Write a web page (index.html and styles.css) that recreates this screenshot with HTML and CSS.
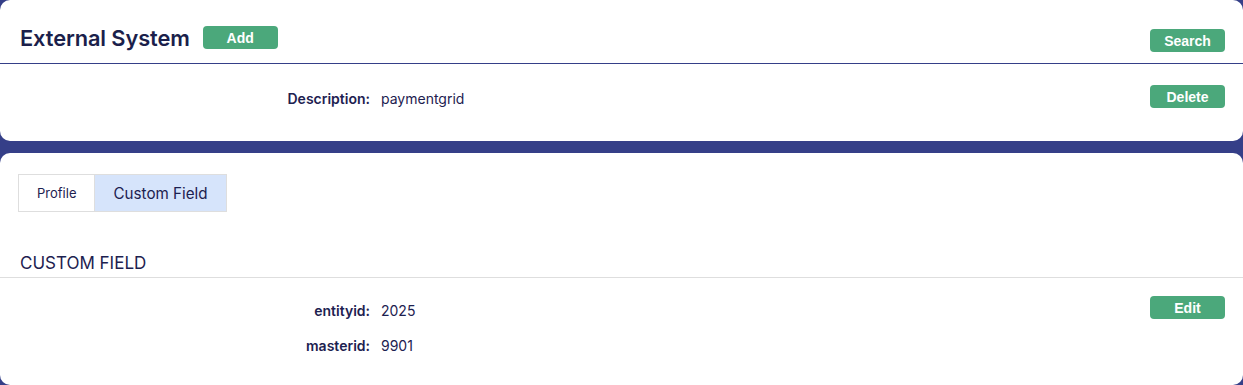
FILE: index.html
```html
<!DOCTYPE html>
<html>
<head>
<meta charset="utf-8">
<link rel="stylesheet" href="styles.css">
</head>
<body>
<section class="card card-top">
  <header class="head">
    <h1 class="title">External System</h1>
    <button class="btn">Add</button>
    <div class="spacer"></div>
    <button class="btn btn-search">Search</button>
  </header>
  <div class="detail">
    <div class="fields">
      <div class="label">Description:</div>
      <div class="value">paymentgrid</div>
    </div>
    <button class="btn">Delete</button>
  </div>
</section>
<section class="card card-bottom">
  <nav class="tabs">
    <div class="tab">Profile</div>
    <div class="tab tab-active">Custom Field</div>
  </nav>
  <h2 class="section-title">CUSTOM FIELD</h2>
  <div class="detail detail-cf">
    <div class="fields">
      <div class="label">entityid:</div>
      <div class="value">2025</div>
      <div class="label">masterid:</div>
      <div class="value">9901</div>
    </div>
    <button class="btn">Edit</button>
  </div>
</section>
</body>
</html>
```

FILE: styles.css
```css
* { box-sizing: border-box; }
html, body { margin: 0; padding: 0; }
body {
  background: #353f88;
  font-family: Inter, "Noto Sans", sans-serif;
  color: #1d2150;
}
.card {
  background: #fff;
  border-radius: 10px;
}
.card-top {
  height: 141px;
  margin-bottom: 12px;
}
.card-bottom {
  min-height: 232px;
  padding-top: 21px;
}
.head {
  display: flex;
  align-items: center;
  height: 64px;
  padding: 12px 18px 0 20px;
  border-bottom: 1px solid #353f88;
}
.title {
  margin: 0 13px 0 0;
  font-size: 21.8px;
  font-weight: 600;
  letter-spacing: -0.1px;
  color: #1b1f4b;
}
.spacer { flex: 1; }
.btn {
  width: 75px;
  height: 23px;
  border: none;
  border-radius: 4px;
  background: #4ba87b;
  color: #fff;
  font-family: "Liberation Sans", Arial, sans-serif;
  font-weight: 700;
  font-size: 14px;
  padding: 0;
  cursor: pointer;
}
.btn-search { margin-top: 6px; }
.detail {
  display: flex;
  align-items: flex-start;
  padding: 21px 18px 0 0;
}
.fields {
  flex: 1;
  display: grid;
  grid-template-columns: 370px auto;
  column-gap: 11px;
  row-gap: 17px;
  align-content: start;
  padding-top: 5px;
  font-size: 14px;
  line-height: 18px;
}
.label {
  text-align: right;
  font-weight: 600;
}
.value { color: #1d2150; }
.tabs {
  display: flex;
  margin-left: 18px;
}
.tab {
  height: 38px;
  display: flex;
  align-items: center;
  border: 1px solid #dedede;
  font-size: 13px;
  padding: 0 18px;
  color: #1d2150;
}
.tab-active {
  background: #d6e4fb;
  border-left: none;
  font-size: 15.2px;
  padding: 0 18px;
}
.section-title {
  margin: 40px 0 0;
  padding: 0 0 3px 20px;
  font-size: 17px;
  font-weight: 400;
  line-height: 22px;
  border-bottom: 1px solid #dedede;
  color: #1d2150;
}
.detail-cf {
  padding-top: 18px;
}
.detail-cf .fields {
  padding-top: 6px;
}
```
